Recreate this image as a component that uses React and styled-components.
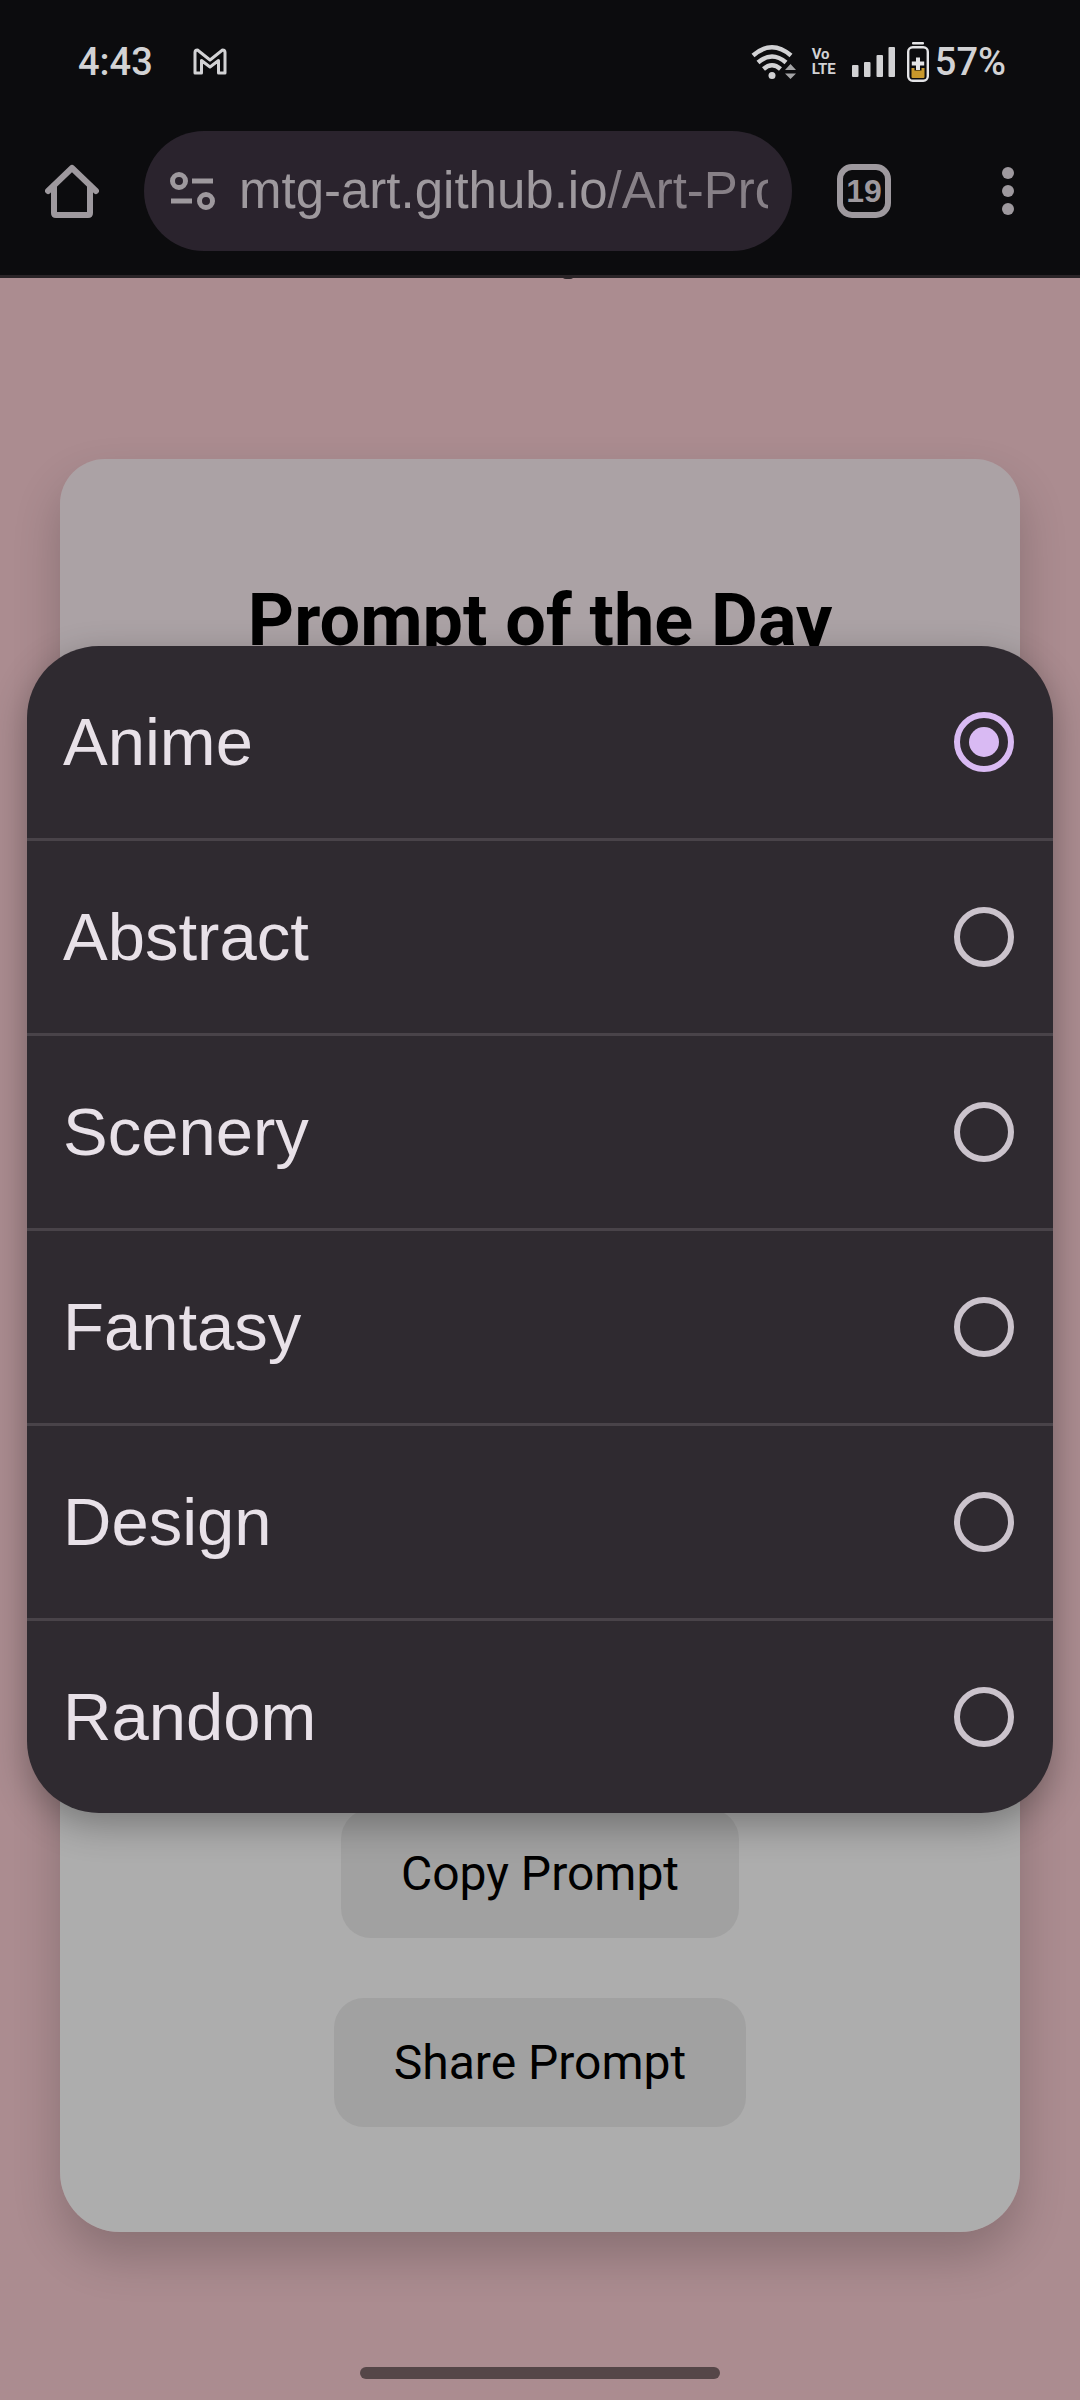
import React, { useState } from "react";
import styled, { createGlobalStyle } from "styled-components";

const GlobalStyle = createGlobalStyle`
  *, *::before, *::after { box-sizing: border-box; }
  body { margin: 0; background: #ab8c90; }
  button, input { font: inherit; margin: 0; }
`;

const Screen = styled.div`
  position: relative;
  min-height: 100vh;
  display: flex;
  flex-direction: column;
  background: #ab8c90;
  font-family: Roboto, "Liberation Sans", sans-serif;
`;

const Header = styled.header`
  position: relative;
  background: #0c0c0e;
  border-bottom: 3px solid #2a2427;
  padding-bottom: 24px;
`;

const StatusBar = styled.div`
  display: flex;
  align-items: center;
  justify-content: space-between;
  height: 123px;
  padding: 0 74px 0 78px;
  color: #d2d2d4;
  font-size: 38px;
  font-weight: 500;
  line-height: 46px;
`;

const StatusGroup = styled.div`
  display: flex;
  align-items: center;
  gap: ${(p) => p.$gap}px;
`;

const Volte = styled.span`
  display: flex;
  flex-direction: column;
  font-size: 15px;
  font-weight: 700;
  line-height: 15px;
`;

const Toolbar = styled.div`
  display: flex;
  align-items: center;
  margin-top: 8px;
  height: 120px;
  padding: 0 45px;
  color: #9e999e;
`;

const IconButton = styled.button`
  display: grid;
  place-items: center;
  flex: none;
  width: 54px;
  height: 54px;
  padding: 0;
  border: 0;
  background: none;
  color: inherit;
`;

const Omnibox = styled.div`
  flex: 1;
  min-width: 0;
  display: flex;
  align-items: center;
  gap: 24px;
  height: 120px;
  margin: 0 45px;
  padding: 0 24px 0 26px;
  border-radius: 60px;
  background: #2a232d;
`;

const Address = styled.a`
  flex: 1;
  min-width: 0;
  overflow: hidden;
  white-space: nowrap;
  font-family: "Liberation Sans", Arial, sans-serif;
  font-size: 51px;
  line-height: 66px;
  color: #9e999e;
  text-decoration: none;
`;

const Path = styled.span`
  color: #878087;
`;

const TabsButton = styled(IconButton)`
  border: 6px solid #9e999e;
  border-radius: 15px;
  font-family: "Liberation Sans", Arial, sans-serif;
  font-size: 32px;
  font-weight: 700;
  line-height: 36px;
`;

const MenuButton = styled(IconButton)`
  margin-left: 90px;
`;

const ScrolledGlyph = styled.span`
  position: absolute;
  left: 52%;
  bottom: -4px;
  width: 12px;
  height: 4px;
  border-radius: 0 0 6px 6px;
  background: #2a2427;
`;

const Main = styled.main`
  flex: 1;
  display: flex;
  flex-direction: column;
  padding: 181px 60px 168px;
`;

const Card = styled.section`
  flex: 1;
  display: flex;
  flex-direction: column;
  align-items: center;
  justify-content: space-between;
  padding: 120px 60px 105px;
  border-radius: 45px 45px 60px 60px;
  background: linear-gradient(#aba2a5 0, #aba2a5 600px, #adadad 601px);
  box-shadow: 0 24px 48px rgba(0, 0, 0, 0.2);
`;

const Title = styled.h1`
  margin: 0;
  font-size: 72px;
  line-height: 84px;
  font-weight: 700;
  color: #000;
`;

const Actions = styled.div`
  display: flex;
  flex-direction: column;
  align-items: center;
  gap: 60px;
`;

const ActionButton = styled.button`
  padding: 36px 60px;
  border: 0;
  border-radius: 30px;
  background: #a1a1a1;
  color: #000;
  font-size: 48px;
  line-height: 57px;
`;

const Overlay = styled.div`
  position: absolute;
  inset: 0;
  padding: 646px 27px 0;
`;

const Dialog = styled.div`
  overflow: hidden;
  border-radius: 72px;
  background: #2f2a30;
  box-shadow: 0 12px 36px rgba(0, 0, 0, 0.3);
`;

const Option = styled.label`
  display: flex;
  align-items: center;
  justify-content: space-between;
  height: 192px;
  padding: 0 39px 0 36px;
  color: #e8e1e8;
  font-family: "Liberation Sans", Arial, sans-serif;
  font-size: 67px;
  line-height: 80px;

  & + & {
    height: 195px;
    border-top: 3px solid #494349;
  }
`;

const Radio = styled.input`
  appearance: none;
  display: grid;
  place-items: center;
  width: 60px;
  height: 60px;
  border: 6px solid #cbc3cc;
  border-radius: 50%;

  &:checked {
    border-color: #d9baf3;
  }

  &:checked::before {
    content: "";
    width: 30px;
    height: 30px;
    border-radius: 50%;
    background: #d9baf3;
  }
`;

const GestureBar = styled.div`
  position: absolute;
  left: 50%;
  bottom: 21px;
  width: 360px;
  height: 12px;
  margin-left: -180px;
  border-radius: 6px;
  background: #554648;
`;

const GmailIcon = () => (
  <svg width="34" height="28" viewBox="0 0 34 28" fill="none" stroke="currentColor" strokeWidth="3" strokeLinejoin="round">
    <path d="M2 25V4.500Q2 2 4.500 2L17 12 29.500 2Q32 2 32 4.500V25H25.500V12.500L17 19 8.500 12.500V25Z" />
  </svg>
);

const WifiIcon = () => (
  <svg width="45" height="36" viewBox="0 0 45 36">
    <g fill="none" stroke="currentColor" strokeWidth="4.500">
      <path d="M2 11.500Q21 -5 40 11.500" />
      <path d="M7 18.500Q21 6.500 35 18.500" />
      <path d="M12.500 25Q21 17.500 29.500 25" />
    </g>
    <circle cx="21" cy="31.500" r="3.500" fill="currentColor" />
    <path d="M34 26l5.500-6 5.500 6zM34 29.500h11l-5.500 5.500z" fill="#a4a4a6" />
  </svg>
);

const SignalIcon = () => (
  <svg width="43" height="30" viewBox="0 0 43 30" fill="currentColor">
    <rect x="0" y="18" width="6.500" height="12" rx="1" />
    <rect x="12" y="15" width="6.500" height="15" rx="1" />
    <rect x="24.500" y="8" width="6.500" height="22" rx="1" />
    <rect x="36.500" y="0" width="6.500" height="30" rx="1" />
  </svg>
);

const BatteryIcon = () => (
  <svg width="22" height="40" viewBox="0 0 22 40">
    <rect x="5" y="0" width="12" height="2.500" rx="1" fill="#e4e4e6" />
    <rect x="1.200" y="5.200" width="19.600" height="33.600" rx="4.500" fill="none" stroke="#e4e4e6" strokeWidth="2.400" />
    <path d="M4.500 26H17.500V35Q17.500 36 16.500 36H5.500Q4.500 36 4.500 35Z" fill="#c8982b" />
    <path d="M11 14.500V28.500M4 21.500H18" stroke="#0c0c0e" strokeWidth="7" />
    <path d="M11 15.500V28M4.800 21.500H17.200" stroke="#e4e4e6" strokeWidth="4" />
  </svg>
);

const HomeIcon = () => (
  <svg width="54" height="54" viewBox="0 0 54 54" fill="none" stroke="currentColor" strokeWidth="6" strokeLinecap="round" strokeLinejoin="round">
    <path d="M3 27L27 4 51 27" />
    <path d="M9 22V49Q9 51 11 51H43Q45 51 45 49V22" />
  </svg>
);

const TuneIcon = () => (
  <svg width="45" height="38" viewBox="0 0 45 38" fill="none" stroke="currentColor" strokeWidth="5">
    <circle cx="9" cy="9" r="6.500" />
    <path d="M22 9H43M1 29H22" />
    <circle cx="36" cy="29" r="6.500" />
  </svg>
);

const MoreIcon = () => (
  <svg width="12" height="48" viewBox="0 0 12 48" fill="currentColor">
    <circle cx="6" cy="6" r="6" />
    <circle cx="6" cy="24" r="6" />
    <circle cx="6" cy="42" r="6" />
  </svg>
);

const STYLES = ["Anime", "Abstract", "Scenery", "Fantasy", "Design", "Random"];

export default function App() {
  const [selected, setSelected] = useState("Anime");

  return (
    <Screen>
      <GlobalStyle />
      <Header>
        <StatusBar>
          <StatusGroup $gap={40}>
            <span>4:43</span>
            <GmailIcon />
          </StatusGroup>
          <StatusGroup $gap={16}>
            <WifiIcon />
            <Volte>
              <span>Vo</span>
              <span>LTE</span>
            </Volte>
            <StatusGroup $gap={12}>
              <SignalIcon />
              <StatusGroup $gap={6}>
                <BatteryIcon />
                <span>57%</span>
              </StatusGroup>
            </StatusGroup>
          </StatusGroup>
        </StatusBar>
        <Toolbar>
          <IconButton aria-label="Home">
            <HomeIcon />
          </IconButton>
          <Omnibox>
            <TuneIcon />
            <Address href="#">
              mtg-art.github.io<Path>/Art-Pro</Path>
            </Address>
          </Omnibox>
          <TabsButton>19</TabsButton>
          <MenuButton aria-label="Menu">
            <MoreIcon />
          </MenuButton>
        </Toolbar>
        <ScrolledGlyph />
      </Header>
      <Main>
        <Card>
          <Title>Prompt of the Day</Title>
          <Actions>
            <ActionButton>Copy Prompt</ActionButton>
            <ActionButton>Share Prompt</ActionButton>
          </Actions>
        </Card>
      </Main>
      <GestureBar />
      <Overlay>
        <Dialog role="radiogroup" aria-label="Style">
          {STYLES.map((name) => (
            <Option key={name}>
              {name}
              <Radio
                type="radio"
                name="style"
                checked={selected === name}
                onChange={() => setSelected(name)}
              />
            </Option>
          ))}
        </Dialog>
      </Overlay>
    </Screen>
  );
}
